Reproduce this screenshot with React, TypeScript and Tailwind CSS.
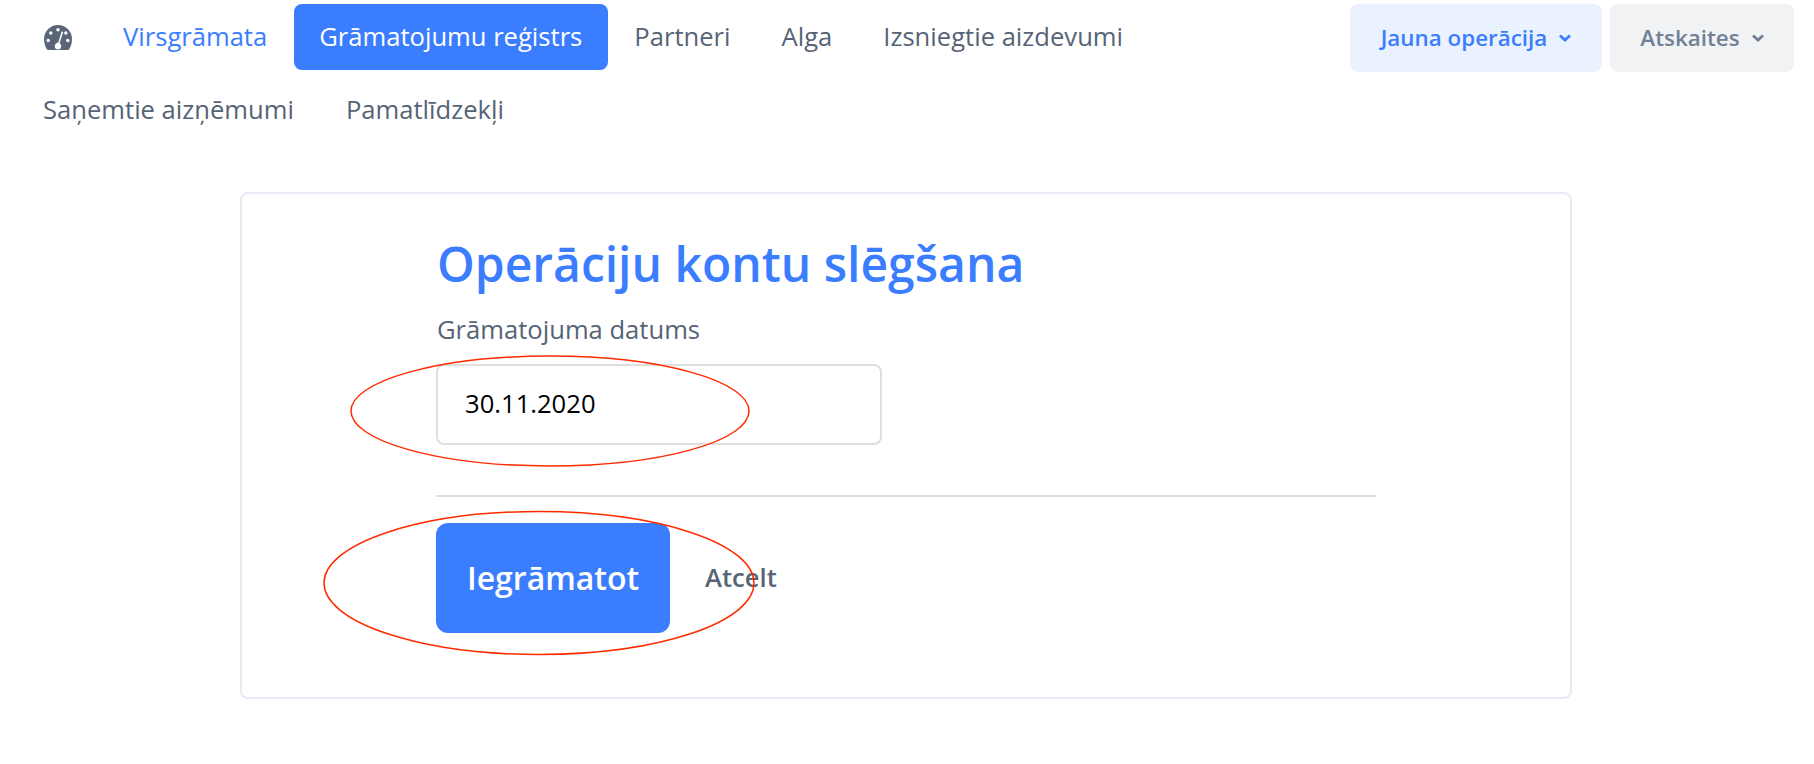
const firstRow = ['Partneri', 'Alga', 'Izsniegtie aizdevumi'];
const secondRow = ['Saņemtie aizņēmumi', 'Pamatlīdzekļi'];

function GaugeIcon() {
  return (
    <svg width="28" height="25" viewBox="0 0 28 25">
      <path d="M14 0C6.3 0 0 6.3 0 14c0 3.6 1 7.300 2.800 10.200.4.500 1 .8 1.600.8h19.200c.6 0 1.200-.3 1.600-.8C27 21.300 28 17.600 28 14 28 6.300 21.700 0 14 0z" fill="#5a6678" />
      <circle cx="14" cy="4.800" r="1.700" fill="#fff" />
      <circle cx="6.800" cy="8" r="1.700" fill="#fff" />
      <circle cx="4.200" cy="15.500" r="1.700" fill="#fff" />
      <circle cx="21.800" cy="8" r="1.700" fill="#fff" />
      <circle cx="23.800" cy="15.500" r="1.700" fill="#fff" />
      <path d="M17.600 6.400l1.600.5-3.600 11.300c1 .7 1.600 1.800 1.600 3 0 1.300-.6 2.500-1.600 3.100h-3.200c-1-.6-1.600-1.800-1.600-3.100 0-1.900 1.500-3.500 3.500-3.600z" fill="#fff" />
    </svg>
  );
}

function Chevron() {
  return (
    <svg width="12" height="8" viewBox="0 0 12 8" fill="none" stroke="currentColor" strokeWidth="2.800">
      <path d="M1 1.500l5 4.500 5-4.500" />
    </svg>
  );
}

export default function App() {
  return (
    <div className="relative h-[764px] overflow-hidden bg-white font-['Open_Sans',sans-serif] text-[#566476]">
      {/* Top navigation */}
      <nav className="flex items-start justify-between pl-[17px] pr-[20px] pt-1">
        <div className="w-[1300px]">
          <div className="flex h-[66px] items-center text-[25.6px]">
            <span className="flex w-[81px] pl-[27px] pt-[1px]">
              <GaugeIcon />
            </span>
            <a className="px-[25px] text-[#3b7dff]">Virsgrāmata</a>
            <a className="ml-[2px] flex h-[66px] items-center rounded-lg bg-[#3b7dff] pl-[25px] pr-[26px] text-white">
              Grāmatojumu reģistrs
            </a>
            {firstRow.map((item) => (
              <a key={item} className="ml-[1px] px-[25px]">
                {item}
              </a>
            ))}
          </div>
          <div className="flex h-[80px] items-center text-[25.6px]">
            {secondRow.map((item) => (
              <a key={item} className="px-[26px]">
                {item}
              </a>
            ))}
          </div>
        </div>
        <div className="flex gap-2 text-[22.4px] font-semibold">
          <button className="flex h-[68px] w-[252px] items-center justify-center gap-[12px] rounded-lg bg-[#ebf2ff] text-[#3b7dff]">
            Jauna operācija
            <Chevron />
          </button>
          <button className="flex h-[68px] w-[184px] items-center justify-center gap-[12px] rounded-lg bg-[#f1f2f4] text-[#718096]">
            Atskaites
            <Chevron />
          </button>
        </div>
      </nav>

      {/* Closing form card */}
      <div className="ml-[240px] mt-[42px] h-[507px] w-[1332px] rounded-lg border-2 border-[#e8eaf5] pl-[194px] pt-[38px]">
        <h1 className="pl-[1px] text-[48px] font-semibold leading-[64px] text-[#3b7dff]">Operāciju kontu slēgšana</h1>
        <label className="mt-[18px] block pl-[1px] text-[25.6px] leading-[32px]">Grāmatojuma datums</label>
        <div className="mt-[18px] flex h-[81px] w-[446px] items-center rounded-lg border-2 border-[#dfdfdf] pl-[27px] text-[25.6px] text-black">
          30.11.2020
        </div>
        <div className="mt-[50px] h-[2px] w-[940px] bg-[#dfdfdf]" />
        <div className="mt-[26px] flex items-center">
          <button className="h-[110px] w-[234px] rounded-xl bg-[#3b7dff] text-[32px] font-semibold text-white">
            Iegrāmatot
          </button>
          <a className="ml-[35px] text-[25.6px] font-semibold">Atcelt</a>
        </div>
      </div>

      {/* Red annotation ellipses drawn over the form */}
      <svg className="absolute left-0 top-0" width="1814" height="764" fill="none" stroke="#ff2a00" strokeWidth="1.5">
        <ellipse cx="550" cy="411" rx="199" ry="55" />
        <ellipse cx="539" cy="583" rx="215" ry="71.5" />
      </svg>
    </div>
  );
}
